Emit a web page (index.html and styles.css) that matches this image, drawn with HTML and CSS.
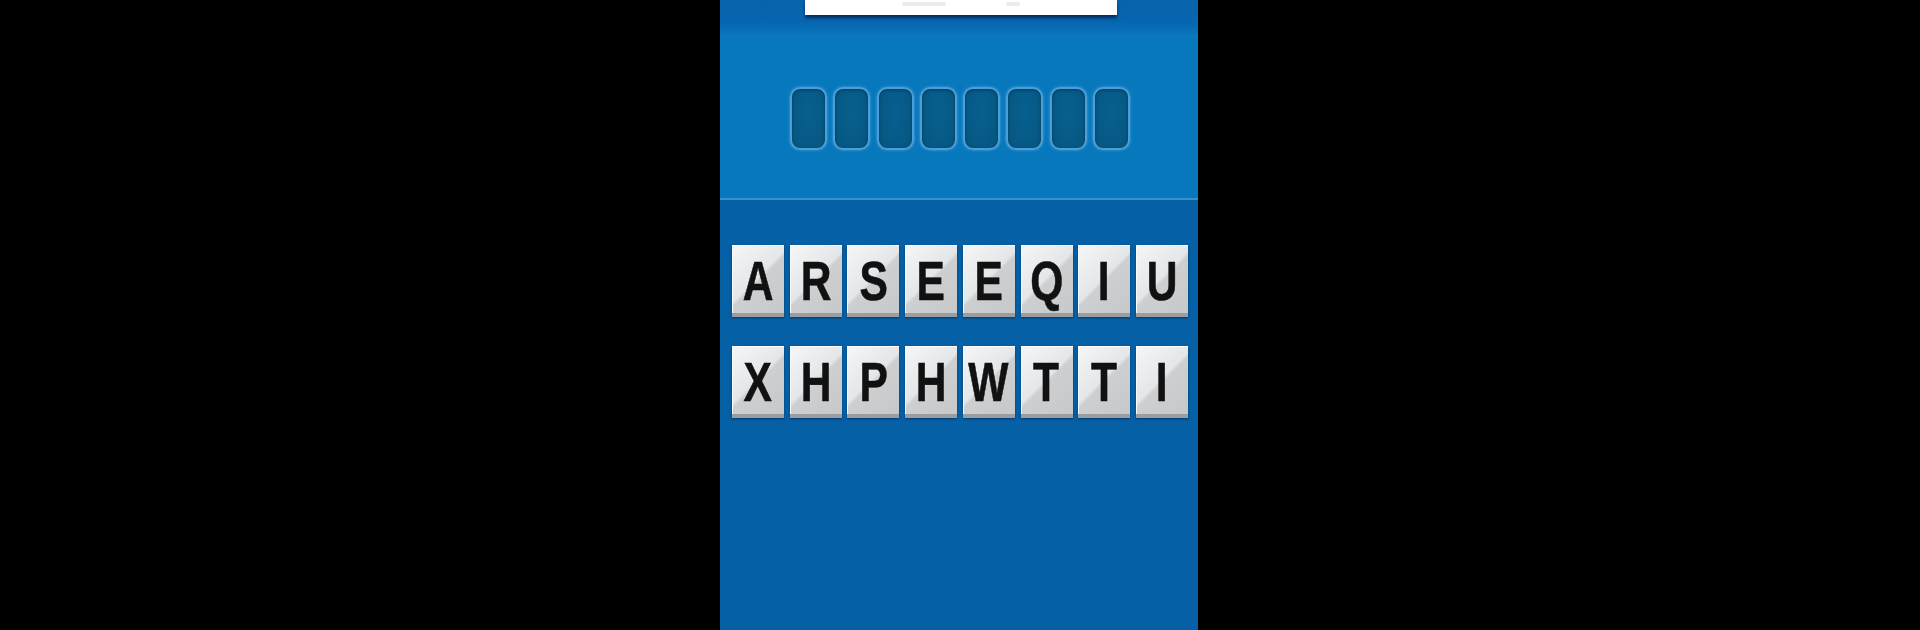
FILE: index.html
```html
<!DOCTYPE html>
<html>
<head>
<meta charset="utf-8">
<link rel="stylesheet" href="styles.css">
</head>
<body>
<div class="stage">
  <div class="panel">
    <div class="header">
      <div class="card"><div class="smudge"></div><div class="smudge small"></div></div>
    </div>
    <div class="answer">
      <div class="slots">
        <div class="slot"></div><div class="slot"></div><div class="slot"></div><div class="slot"></div>
        <div class="slot"></div><div class="slot"></div><div class="slot"></div><div class="slot"></div>
      </div>
    </div>
    <div class="keys">
      <div class="row">
        <div class="tile"><span>A</span></div><div class="tile"><span>R</span></div><div class="tile"><span>S</span></div><div class="tile"><span>E</span></div>
        <div class="tile"><span>E</span></div><div class="tile"><span>Q</span></div><div class="tile"><span>I</span></div><div class="tile"><span>U</span></div>
      </div>
      <div class="row">
        <div class="tile"><span>X</span></div><div class="tile"><span>H</span></div><div class="tile"><span>P</span></div><div class="tile"><span>H</span></div>
        <div class="tile"><span>W</span></div><div class="tile"><span>T</span></div><div class="tile"><span>T</span></div><div class="tile"><span>I</span></div>
      </div>
    </div>
  </div>
</div>
</body>
</html>
```
FILE: styles.css
```css
html, body {
  margin: 0;
  padding: 0;
  background: #000;
  height: 630px;
  overflow: hidden;
}
.stage {
  display: flex;
  justify-content: center;
  height: 630px;
}
.panel {
  width: 478px;
  height: 630px;
  display: flex;
  flex-direction: column;
  background: #0660a6;
  margin-left: -2px;
  box-shadow: inset -2px 0 0 #06518f;
}
.header {
  height: 38px;
  background: linear-gradient(to bottom, #0763ac 0%, #0766b0 60%, #0a7ac0 100%);
  display: flex;
  justify-content: center;
  flex-shrink: 0;
}
.card {
  width: 312px;
  height: 15px;
  background: #fff;
  box-shadow: 0 3px 3px rgba(0, 20, 60, 0.7);
  margin-left: 3px;
  display: flex;
  align-items: flex-end;
  justify-content: center;
  gap: 60px;
  overflow: hidden;
}
.smudge {
  width: 44px;
  height: 4px;
  margin-bottom: 9px;
  border-radius: 2px;
  background: #ececec;
}
.smudge.small {
  width: 14px;
}
.answer {
  height: 162px;
  background: #0878bd;
  border-bottom: 2px solid #3a8fcc;
  display: flex;
  justify-content: center;
  align-items: flex-start;
  padding-top: 49px;
  box-sizing: border-box;
  flex-shrink: 0;
}
.slots {
  display: flex;
  gap: 6.3px;
  margin-left: 2px;
}
.slot {
  width: 33px;
  height: 59px;
  border: 2px solid #4b9fd6;
  border-radius: 10px;
  background: radial-gradient(ellipse at 50% 40%, #07608f 0%, #06557f 100%);
  box-shadow: 0 0 3px rgba(120, 190, 240, 0.6), inset 0 1px 3px rgba(0, 30, 60, 0.5);
}
.keys {
  flex: 1;
  display: flex;
  flex-direction: column;
  align-items: center;
  padding-top: 45px;
  gap: 29px;
  background: #0660a6;
}
.row {
  display: flex;
  gap: 5.7px;
  margin-left: 2px;
}
.tile {
  width: 52px;
  height: 67px;
  background: linear-gradient(135deg, #f4f6f7 0%, #e4e7e9 48%, #cdcfd1 52%, #c6c8ca 100%);
  border-top: 1px solid #ffffff;
  border-bottom: 4px solid #9a9ea3;
  box-shadow: 0 1px 2px rgba(0, 20, 50, 0.5), inset 1px 0 0 #fbfcfd;
  display: flex;
  justify-content: center;
  align-items: center;
  overflow: hidden;
}
.tile span {
  font-family: "Liberation Sans", Arial, sans-serif;
  font-weight: bold;
  font-size: 56px;
  line-height: 56px;
  color: #111;
  -webkit-text-stroke: 0.6px #111;
  transform: scaleX(0.76);
  margin-top: 2px;
}
```
